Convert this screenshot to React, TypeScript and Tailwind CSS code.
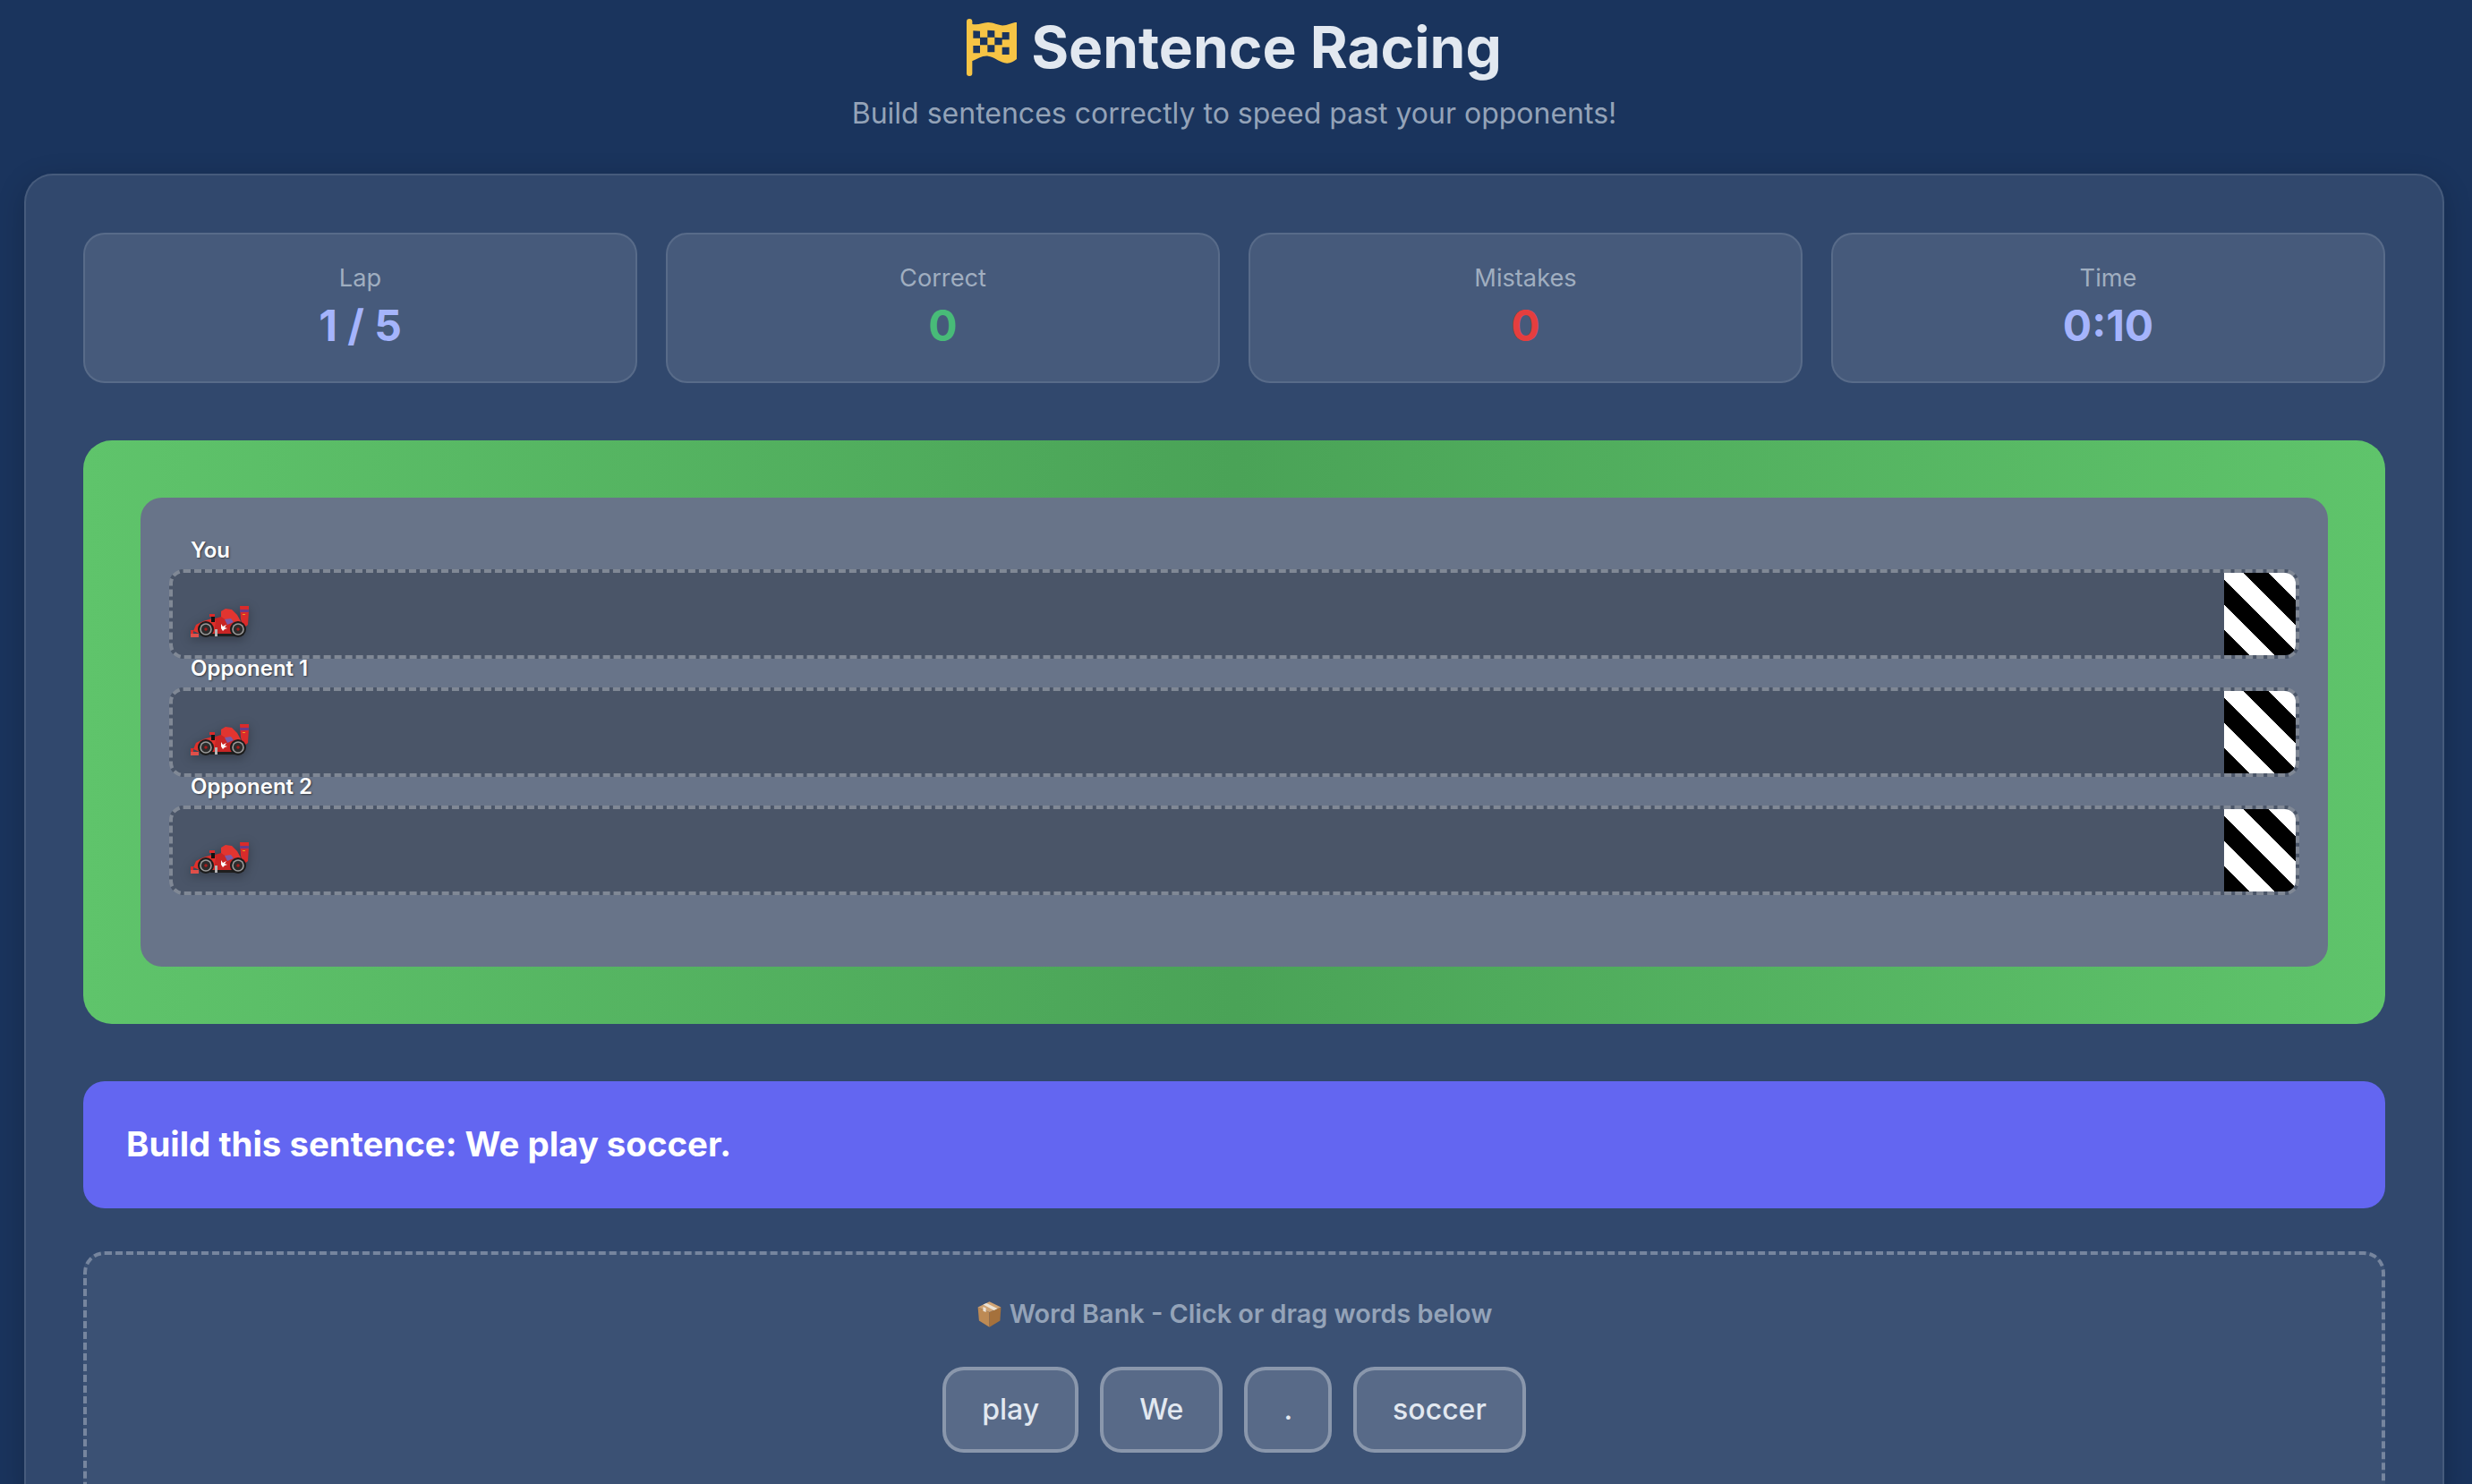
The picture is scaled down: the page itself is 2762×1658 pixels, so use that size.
const FONT = "font-['Inter','Noto_Sans',sans-serif]";

const stats = [
  { label: "Lap", value: "1 / 5", color: "text-[#a5b4fc]" },
  { label: "Correct", value: "0", color: "text-[#48bb78]" },
  { label: "Mistakes", value: "0", color: "text-[#e53e3e]" },
  { label: "Time", value: "0:10", color: "text-[#a5b4fc]" },
];

const lanes = ["You", "Opponent 1", "Opponent 2"];
const words = ["play", "We", ".", "soccer"];

function FlagIcon() {
  return (
    <svg width="56" height="64" viewBox="33 30 168 192" className="shrink-0">
      <rect x="33" y="30" width="19" height="192" rx="9.500" fill="#f6c445" />
      <path
        fillRule="evenodd"
        fill="#f6c445"
        d="M50 47C70 52 85 44 105 42C125 42 140 54 160 52C175 50 185 42 201 42L201 165C190 175 175 182 160 178C140 172 125 158 105 155C85 153 70 165 50 172ZM55 70V95H78V71ZM103 68V92H127V70ZM152 75V100H176V75ZM78 92V118H103V92ZM127 92V118H152V94ZM55 120V145H78V120ZM103 118V142H127V118ZM152 125V150H176V125Z"
      />
    </svg>
  );
}

function CarIcon() {
  return (
    <svg width="65" height="36" viewBox="0 0 65 36" className="shrink-0 drop-shadow-[0_3px_6px_rgba(0,0,0,0.3)]">
      <path fill="#d92b2b" d="M55 0h10v5l-1 16-5 4-3-10z" />
      <path fill="#6b3a86" d="M55 4h10v3H55z" />
      <path fill="#e8a020" d="M58 9h3v1h-3z" />
      <path fill="#e23530" d="M34 6l5-3 7 1 6 6 5 9 1 7H34z" />
      <path fill="#c92525" d="M24 15l10-3 6 4 8 1 5 8v6H24z" />
      <path fill="#7b5aa6" d="M38 15l7-1 3 4-7 3z" />
      <path fill="#e0302b" d="M3 28l3-7 8-4 10-3 4 3-2 14H10z" />
      <path fill="#111" d="M23 11h4v7h-4z" />
      <path fill="#d92b2b" d="M21 9h6v3h-6z" />
      <path fill="#1f1f1f" d="M22 31h30v3H22z" />
      <path fill="#fff" d="M34 20l2 3 4-2-2 3 3 1-3 1-2 2-2-3z" />
      <path fill="#b5b5b5" d="M27 26h3v8h-3z" />
      <path fill="#d92b2b" d="M0 27h3v8H0z" />
      <path fill="#e0504a" d="M0 31h9v4H0z" />
      {[17, 53].map((cx) => (
        <g key={cx}>
          <circle cx={cx} cy="26" r="9" fill="#1c1c1c" />
          <circle cx={cx} cy="26" r="6.800" fill="#9a9a9a" />
          <circle cx={cx} cy="26" r="5.200" fill="#2c2c2c" />
          <circle cx={cx} cy="26" r="1.800" fill="#a81c1c" />
        </g>
      ))}
    </svg>
  );
}

function BoxIcon() {
  return (
    <svg width="29" height="31" viewBox="15 10 90 96" className="shrink-0">
      <path fill="#bd8a54" d="M60 50L20 33L24 80L60 102Z" />
      <path fill="#a5713c" d="M60 50L100 33L97 80L60 102Z" />
      <path fill="#d0a373" d="M60 14L100 33L60 50L20 33Z" />
      <path fill="#ece3d6" d="M38 24L50 19L88 38L76 44Z" />
      <path fill="#ece3d6" d="M38 32L48 36V50L38 46Z" />
    </svg>
  );
}

export default function App() {
  return (
    <div className={`${FONT} h-screen overflow-hidden bg-[#1a345d] pl-[27px] pr-[31px]`}>
      <header className="h-[194px] pt-[14px] text-center">
        <h1 className="flex h-[78px] items-center justify-center gap-[16px] text-[64px] font-bold text-[#e2e8f0]">
          <FlagIcon />
          Sentence Racing
        </h1>
        <p className="mt-[15px] text-[32px] leading-[40px] text-[#94a3b8]">Build sentences correctly to speed past your opponents!</p>
      </header>

      <main className="h-[1500px] rounded-[32px] border-2 border-white/10 bg-white/10 p-16 shadow-[0_8px_32px_rgba(0,0,0,0.2)]">
        <div className="grid grid-cols-4 gap-8">
          {stats.map((s) => (
            <div key={s.label} className="h-[168px] rounded-[24px] border-2 border-white/10 bg-white/10 pt-[32px] text-center">
              <div className="text-[27.2px] leading-[34px] text-[#a0aec0]">{s.label}</div>
              <div className={`mt-[5px] text-[48px] leading-[62px] font-bold ${s.color}`}>{s.value}</div>
            </div>
          ))}
        </div>

        <section className="mt-16 rounded-[32px] bg-[linear-gradient(90deg,#5fc46b_0%,#4aa357_50%,#5fc46b_100%)] p-16">
          <div className="rounded-[24px] bg-[#687489] px-8 pt-[48px] pb-[80px]">
            {lanes.map((name) => (
              <div key={name}>
                <div className="h-[32px] pl-[24px] text-[24px] leading-[22px] font-semibold text-white [text-shadow:1px_1px_2px_rgba(0,0,0,0.5)]">{name}</div>
                <div className="flex h-[100px] items-stretch justify-between overflow-hidden rounded-[16px] border-4 border-dashed border-white/30 bg-[#4a5568]">
                  <div className="flex items-center pt-[17px] pl-[20px]">
                    <CarIcon />
                  </div>
                  <div className="w-[80px] bg-[repeating-linear-gradient(45deg,#000_0,#000_20px,#fff_20px,#fff_40px)]" />
                </div>
              </div>
            ))}
          </div>
        </section>

        <section className="mt-16 flex h-[142px] items-center rounded-[24px] bg-[#6366f1] px-12 text-[38.4px] font-bold text-white">
          Build this sentence: We play soccer.
        </section>

        <section className="mt-[48px] h-[400px] rounded-[24px] border-4 border-dashed border-white/30 bg-white/5 pt-[48px]">
          <div className="flex items-center justify-center gap-[8px] text-[28.8px] leading-[36px] font-semibold text-[#94a3b8]">
            <BoxIcon />
            Word Bank - Click or drag words below
          </div>
          <div className="mt-[41px] flex justify-center gap-6">
            {words.map((w) => (
              <div key={w} className="flex h-[96px] items-center rounded-[24px] border-4 border-white/30 bg-white/15 px-[40px] text-[32px] font-medium text-[#e2e8f0]">
                {w}
              </div>
            ))}
          </div>
        </section>
      </main>
    </div>
  );
}
